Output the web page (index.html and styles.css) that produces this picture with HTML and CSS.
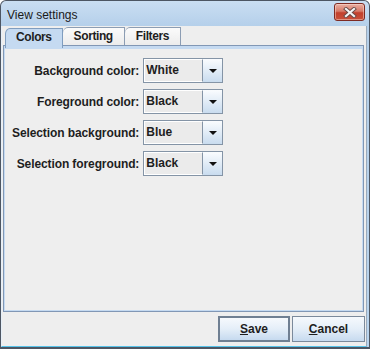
FILE: index.html
```html
<!DOCTYPE html>
<html>
<head>
<meta charset="utf-8">
<link rel="stylesheet" href="styles.css">
</head>
<body>
<div class="window">
  <div class="titlebar">
    <span class="title">View settings</span>
    <div class="close">
      <svg width="16" height="11" viewBox="0 0 16 11">
        <path d="M4 2 L12 9 M12 2 L4 9" stroke="#6a4a46" stroke-width="4" stroke-linecap="square" fill="none"/>
        <path d="M4 2 L12 9 M12 2 L4 9" stroke="#f4f4f4" stroke-width="2.2" stroke-linecap="square" fill="none"/>
      </svg>
    </div>
  </div>
  <div class="client">
    <div class="tabpane">
      <div class="tabstrip">
        <div class="tab selected">Colors</div>
        <div class="tab">Sorting</div>
        <div class="tab">Filters</div>
      </div>
      <div class="panel">
        <div class="form">
          <label class="lbl">Background color:</label>
          <div class="combo"><span class="value">White</span><span class="arrow"><i></i></span></div>
          <label class="lbl">Foreground color:</label>
          <div class="combo"><span class="value">Black</span><span class="arrow"><i></i></span></div>
          <label class="lbl">Selection background:</label>
          <div class="combo"><span class="value">Blue</span><span class="arrow"><i></i></span></div>
          <label class="lbl">Selection foreground:</label>
          <div class="combo"><span class="value">Black</span><span class="arrow"><i></i></span></div>
        </div>
      </div>
    </div>
    <div class="buttons">
      <button class="btn default"><u>S</u>ave</button>
      <button class="btn"><u>C</u>ancel</button>
    </div>
  </div>
</div>
</body>
</html>
```
FILE: styles.css
```css
* { box-sizing: border-box; }
html, body { margin: 0; padding: 0; background: #ffffff; }
body { font-family: "Liberation Sans", Arial, sans-serif; font-size: 12px; color: #1e1e1e; }

.window {
  width: 370px;
  height: 349px;
  border: 1px solid #4d5663;
  border-bottom-width: 2px;
  border-radius: 6px 6px 0 0;
  background: linear-gradient(#cadef2 0px, #b4cfea 26px, #b9d4ee 100%);
  display: flex;
  flex-direction: column;
  overflow: hidden;
}

.titlebar {
  height: 25px;
  flex: none;
  display: flex;
  align-items: center;
  padding: 0 4px 0 6px;
}
.title { flex: 1; font-size: 12px; color: #1a1a1a; padding-top: 3px; }
.close {
  width: 31px;
  height: 18px;
  margin-top: -3px;
  border: 1px solid #7e2a22;
  border-radius: 3px;
  background: linear-gradient(#eab0a4 0%, #d77a68 45%, #c2402c 55%, #c9503a 100%);
  box-shadow: inset 0 0 0 1px rgba(255,230,220,0.45);
  display: flex;
  align-items: center;
  justify-content: center;
}

.client {
  flex: 1;
  margin: 0 2px 0 0;
  border-left: 1px solid #e6eff8;
  border-right: 1px solid #9aaabb;
  border-bottom: 1px solid #56c3ea;
  background: #eeeeee;
  display: flex;
  flex-direction: column;
  padding: 1px 1px 4px 1px;
}

.tabpane { flex: 1; display: flex; flex-direction: column; }
.tabstrip { display: flex; height: 18px; padding-left: 2px; position: relative; z-index: 1; }
.tab {
  height: 18px;
  padding: 0 11px 0 11px;
  border: 1px solid #8c9db3;
  border-bottom: none;
  border-left: none;
  border-top-left-radius: 5px 6px;
  background: linear-gradient(#fbfbfb, #ececec);
  font-weight: bold;
  font-size: 12px;
  letter-spacing: -0.4px;
  line-height: 17px;
  color: #1e1e1e;
}
.tab.selected {
  border-left: 1px solid #7f9dbf;
  border-color: #7f9dbf;
  margin-top: 1px;
  height: 20px;
  padding: 0 10px 0 10px;
  background: #c5daf1;
  line-height: 16px;
}

.panel {
  flex: 1;
  margin-right: 1px;
  border: 1px solid #8197b5;
  box-shadow: inset 0 0 0 1px #c5daf1;
  background: #eeeeee;
  position: relative;
}
.panel::before {
  content: "";
  position: absolute;
  left: 0; right: 0; top: 0;
  height: 3px;
  background: #c5daf1;
}

.form {
  display: grid;
  grid-template-columns: max-content 80px;
  column-gap: 4px;
  row-gap: 6px;
  padding: 12px 0 0 8px;
  align-items: center;
}
.lbl { justify-self: end; font-weight: bold; font-size: 12px; letter-spacing: -0.1px; color: #1e1e1e; }

.combo {
  height: 25px;
  display: flex;
  border: 1px solid #8494a6;
  background: #ececec;
}
.value {
  flex: 1;
  border: 1px solid #ffffff;
  border-right: 1px solid #8494a6;
  background: #ebebeb;
  font-weight: bold;
  font-size: 12px;
  line-height: 21px;
  padding-left: 1px;
}
.arrow {
  width: 19px;
  background: linear-gradient(#fafcfe, #c9dcef);
  display: flex;
  align-items: center;
  justify-content: center;
}
.arrow i {
  width: 0; height: 0;
  border-left: 4px solid transparent;
  border-right: 4px solid transparent;
  border-top: 4px solid #111111;
  margin-top: 1px;
}

.buttons {
  flex: none;
  display: flex;
  justify-content: flex-end;
  align-items: flex-start;
  gap: 2px;
  padding: 4px 0 0 0;
  height: 30px;
}
.btn {
  height: 26px;
  font-family: "Liberation Sans", Arial, sans-serif;
  font-weight: bold;
  font-size: 12px;
  color: #1e1e1e;
  border: 1px solid #7b8a9c;
  background: linear-gradient(#f6f9fd, #e4eef8 50%, #c6daef);
  padding: 0;
  width: 73px;
}
.btn.default { width: 72px; border: 2px solid #6f7f92; }
.btn u { text-decoration: underline; }
```
